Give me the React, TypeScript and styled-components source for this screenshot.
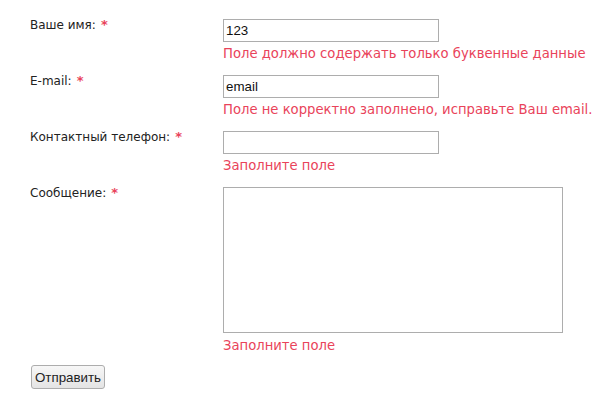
import * as React from 'react'
import styled, { createGlobalStyle } from 'styled-components'

const GlobalStyle = createGlobalStyle`
  body {
    margin: 0;
    background: #fff;
    font-family: "DejaVu Sans", Verdana, sans-serif;
  }
`

const Form = styled.form`
  padding: 19px 0 0 30px;
  display: flex;
  flex-direction: column;
`

const Row = styled.div`
  display: grid;
  grid-template-columns: 193px auto;
  margin-bottom: 13px;
`

const Label = styled.label`
  margin-top: -2px;
  font-size: 12px;
  line-height: 15px;
  color: #222;
`

const Star = styled.span`
  color: #e9435a;
  font-size: 13px;
  font-weight: bold;
  margin-left: 5px;
`

const Field = styled.div`
  display: flex;
  flex-direction: column;
  align-items: flex-start;
`

const TextInput = styled.input`
  box-sizing: border-box;
  width: 216px;
  height: 23px;
  margin: 0;
  padding: 1px 2px;
  border: 1px solid #adadad;
  font-family: "Liberation Sans", Arial, sans-serif;
  font-size: 13.33px;
  color: #111;
  outline: none;
`

const TextArea = styled.textarea`
  box-sizing: border-box;
  width: 340px;
  height: 146px;
  margin: 0;
  border: 1px solid #adadad;
  resize: none;
  outline: none;
`

const ErrorText = styled.div<{ gap?: number }>`
  margin-top: ${p => p.gap ?? 3}px;
  font-size: 13.2px;
  line-height: 17px;
  color: #e9435a;
  white-space: nowrap;
`

const SubmitButton = styled.button`
  align-self: flex-start;
  margin-top: -2px;
  margin-left: 1px;
  box-sizing: border-box;
  width: 74px;
  height: 24px;
  padding: 0;
  border: 1px solid #adadad;
  border-radius: 3px;
  background: linear-gradient(#f7f7f7, #e4e4e4);
  font-family: "Liberation Sans", Arial, sans-serif;
  font-size: 13.33px;
  color: #222;
`

type FieldDef = {
  label: string
  value?: string
  error: string
  multiline?: boolean
}

const fields: FieldDef[] = [
  { label: 'Ваше имя:', value: '123', error: 'Поле должно содержать только буквенные данные' },
  { label: 'E-mail:', value: 'email', error: 'Поле не корректно заполнено, исправьте Ваш email.' },
  { label: 'Контактный телефон:', error: 'Заполните поле' },
  { label: 'Сообщение:', error: 'Заполните поле', multiline: true },
]

export default function App() {
  return (
    <>
      <GlobalStyle />
      <Form onSubmit={e => e.preventDefault()}>
        {fields.map(f => (
          <Row key={f.label}>
            <Label>{f.label}<Star>*</Star></Label>
            <Field>
              {f.multiline
                ? <TextArea />
                : <TextInput defaultValue={f.value} />}
              <ErrorText gap={f.multiline ? 4 : 3}>{f.error}</ErrorText>
            </Field>
          </Row>
        ))}
        <SubmitButton type="submit">Отправить</SubmitButton>
      </Form>
    </>
  )
}
